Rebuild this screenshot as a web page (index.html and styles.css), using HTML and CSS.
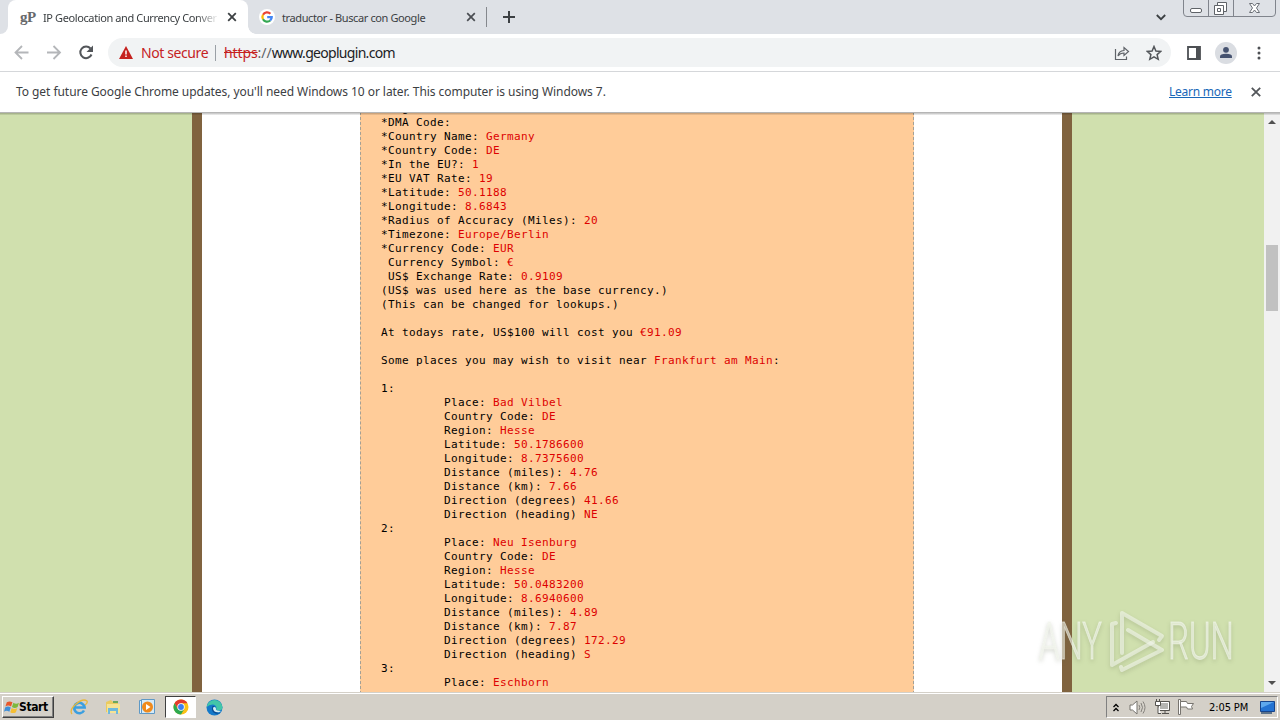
FILE: index.html
```
<!DOCTYPE html>
<html lang="en">
<head>
    <meta charset="utf-8">
    <title>IP Geolocation and Currency Converter</title>
    <link rel="stylesheet" href="styles.css">
</head>
<body>

<div class="tabs">
    <div class="corner"></div>
    <div class="tab active">
        <span class="gp">gP</span>
        <span class="title fade">IP Geolocation and Currency Conver</span>
        <svg class="close" width="10" height="10" viewBox="0 0 10 10"><path d="M1.2 1.2l7.6 7.6M8.8 1.2l-7.6 7.6" stroke="#3c4043" stroke-width="1.8"/></svg>
    </div>
    <div class="tab other">
        <svg class="google" width="16" height="16" viewBox="0 0 16 16">
            <circle cx="8" cy="8" r="8" fill="#fff"/>
            <g fill="none" stroke-width="2.3">
                <path d="M4 5.7A4.7 4.7 0 0 1 11.4 4.7" stroke="#ea4335"/>
                <path d="M4 5.7A4.7 4.7 0 0 0 4 10.3" stroke="#fbbc05"/>
                <path d="M4 10.3A4.7 4.7 0 0 0 11.2 11.5" stroke="#34a853"/>
                <path d="M11.2 11.5A4.7 4.7 0 0 0 12.7 8.2H8.2" stroke="#4285f4"/>
            </g>
        </svg>
        <span class="title">traductor - Buscar con Google</span>
        <svg class="close" width="10" height="10" viewBox="0 0 10 10"><path d="M1.2 1.2l7.6 7.6M8.8 1.2l-7.6 7.6" stroke="#4a4d52" stroke-width="1.7"/></svg>
    </div>
    <div class="tab-line"></div>
    <svg class="plus" width="12" height="12" viewBox="0 0 12 12"><path d="M6 0v12M0 6h12" stroke="#3c4043" stroke-width="2"/></svg>
    <svg class="chevron" width="10" height="7" viewBox="0 0 10 7"><path d="M.8 1L5 5.2 9.2 1" fill="none" stroke="#3c4043" stroke-width="1.8"/></svg>
    <svg class="window-buttons" width="93" height="17" viewBox="0 0 93 17">
        <path d="M.5 0v13q0 3.5 3.5 3.5h85q3.5 0 3.5-3.5V0M25.5 0v16M50.5 0v16" fill="none" stroke="#80848c"/>
        <rect x="7.5" y="8.5" width="11" height="4" rx="1.5" fill="#fff" stroke="#5f6368"/>
        <path d="M34.5 2.5h9v9h-9z" fill="#fff" stroke="#5f6368"/>
        <path d="M31.5 5.5h9v9h-9z" fill="#fff" stroke="#5f6368"/>
        <path d="M34.5 8.5h3v3h-3z" fill="none" stroke="#5f6368"/>
        <path d="M66.5 3.5h3l2 2.5 2-2.5h3l-3 4.5 3 4.5h-3l-2-2.5-2 2.5h-3l3-4.5z" fill="#fff" stroke="#6b6f76"/>
    </svg>
</div>

<div class="toolbar">
    <svg class="nav" width="80" height="18" viewBox="0 0 80 18">
        <g fill="none" stroke-width="1.8">
            <path d="M14.5 8.5H2M8 2L1.5 8.5 8 15" stroke="#b4b6b9"/>
            <path d="M33 8.5h12.5M39.5 2L46 8.5 39.5 15" stroke="#b4b6b9"/>
            <path d="M76.5 4.5A5.8 5.8 0 1 0 77.5 10.5" stroke="#53565a" stroke-width="2"/>
        </g>
        <path d="M79 1.5V8h-6.5z" fill="#53565a"/>
    </svg>
    <div class="address">
        <svg width="14" height="13" viewBox="0 0 14 13"><path d="M7 0l7 13H0z" fill="#c5221f"/><path d="M7 4.5v4M7 9.5v1.6" stroke="#fff" stroke-width="1.5"/></svg>
        <span class="not-secure">Not secure</span>
        <span class="address-line"></span>
        <span class="url"><s>https</s><i>://</i>www.geoplugin.com</span>
        <svg class="share" width="16" height="16" viewBox="0 0 16 16"><path d="M1.5 4v10.5h11V11.5M4 11q.5-5 6-5.5V2.5l4.5 4-4.5 4V8Q6 8 4 11z" fill="none" stroke="#5f6368" stroke-width="1.2"/></svg>
        <svg class="star" width="16" height="16" viewBox="0 0 16 16"><path d="M8 1.5l1.9 4.5 4.9.4-3.7 3.2 1.1 4.7L8 11.8l-4.2 2.5 1.1-4.7L1.2 6.4 6.1 6z" fill="none" stroke="#53565a" stroke-width="1.5"/></svg>
    </div>
    <svg class="panel" width="14" height="14" viewBox="0 0 14 14"><path d="M1 1h12v12H1z" fill="none" stroke="#4d5054" stroke-width="1.8"/><path d="M9 1h4v12H9z" fill="#4d5054"/></svg>
    <svg class="avatar" width="22" height="22" viewBox="0 0 22 22"><circle cx="11" cy="11" r="11" fill="#dadde2"/><circle cx="11" cy="7.8" r="2.9" fill="#465370"/><path d="M5 16v-1.5Q5 11.8 11 11.8t6 2.7V16z" fill="#465370"/></svg>
    <svg class="dots" width="4" height="14" viewBox="0 0 4 14"><g fill="#4d5054"><circle cx="2" cy="2" r="1.5"/><circle cx="2" cy="7" r="1.5"/><circle cx="2" cy="12" r="1.5"/></g></svg>
</div>

<div class="infobar">
    <span class="message">To get future Google Chrome updates, you'll need Windows 10 or later. This computer is using Windows 7.</span>
    <a class="learn">Learn more</a>
    <svg width="10" height="10" viewBox="0 0 10 10"><path d="M.8.8l8.4 8.4M9.2.8L.8 9.2" stroke="#53565a" stroke-width="1.8"/></svg>
</div>

<div class="content">
    <div class="page">
        <div class="column">
<pre class="result">*Region: <b>Hesse</b>
*DMA Code:
*Country Name: <b>Germany</b>
*Country Code: <b>DE</b>
*In the EU?: <b>1</b>
*EU VAT Rate: <b>19</b>
*Latitude: <b>50.1188</b>
*Longitude: <b>8.6843</b>
*Radius of Accuracy (Miles): <b>20</b>
*Timezone: <b>Europe/Berlin</b>
*Currency Code: <b>EUR</b>
 Currency Symbol: <b>€</b>
 US$ Exchange Rate: <b>0.9109</b>
(US$ was used here as the base currency.)
(This can be changed for lookups.)

At todays rate, US$100 will cost you <b>€91.09</b>

Some places you may wish to visit near <b>Frankfurt am Main</b>:

1:
         Place: <b>Bad Vilbel</b>
         Country Code: <b>DE</b>
         Region: <b>Hesse</b>
         Latitude: <b>50.1786600</b>
         Longitude: <b>8.7375600</b>
         Distance (miles): <b>4.76</b>
         Distance (km): <b>7.66</b>
         Direction (degrees) <b>41.66</b>
         Direction (heading) <b>NE</b>
2:
         Place: <b>Neu Isenburg</b>
         Country Code: <b>DE</b>
         Region: <b>Hesse</b>
         Latitude: <b>50.0483200</b>
         Longitude: <b>8.6940600</b>
         Distance (miles): <b>4.89</b>
         Distance (km): <b>7.87</b>
         Direction (degrees) <b>172.29</b>
         Direction (heading) <b>S</b>
3:
         Place: <b>Eschborn</b>
</pre>
        </div>
    </div>
    <div class="scrollbar">
        <svg width="8" height="4" viewBox="0 0 8 4"><path d="M0 4l4-4 4 4z" fill="#505050"/></svg>
        <div class="thumb"></div>
        <svg class="down" width="8" height="4" viewBox="0 0 8 4"><path d="M0 0l4 4 4-4z" fill="#505050"/></svg>
    </div>
    <svg class="watermark" width="220" height="76" viewBox="0 0 220 76">
        <g class="mark-text">
            <text x="7" y="54" textLength="63" lengthAdjust="spacingAndGlyphs">ANY</text>
            <text x="136" y="54" textLength="66" lengthAdjust="spacingAndGlyphs">RUN</text>
        </g>
        <g fill="none" stroke="#f3f6ee" stroke-width="4" stroke-opacity=".6" stroke-linejoin="round" stroke-linecap="round">
            <path d="M90 48V8l40 23-3 4"/>
            <path d="M96 25l34 20L90 65l-1-3"/>
            <path d="M84 18l-4 1v41l41-23"/>
        </g>
    </svg>
</div>

<div class="taskbar">
    <div class="start">
        <svg width="15" height="16" viewBox="0 0 16 16">
            <path d="M3 3q3-2 6 0L7.5 7.5q-3-2-6 0z" fill="#e8572a"/><path d="M10 3.5q3 2 6 0L14.5 8q-3 2-6 0z" fill="#7db83c"/>
            <path d="M1.2 8.5q3-2 6 0L5.7 13q-3-2-5.7 0z" fill="#3f8fd8"/><path d="M8.2 9q3 2 6 0l-1.5 4.5q-3 2-6 0z" fill="#f5be33"/>
        </svg>
        <span>Start</span>
    </div>
    <svg class="ie" width="18" height="18" viewBox="0 0 18 18"><path d="M14 12.5a5.2 5.2 0 1 1 .6-3H4.5" fill="none" stroke="#3b9fe0" stroke-width="2.6"/><path d="M2 16Q-1 12 6 6t11-3q1 2-2 4" fill="none" stroke="#e8b83c" stroke-width="1.3"/></svg>
    <svg class="folder" width="18" height="18" viewBox="0 0 18 18"><path d="M2 4l5-2 2 2h5v10H2z" fill="#eacb60"/><path d="M3 6h13v9H3z" fill="#f6e394"/><path d="M4 16V10h10v6h-2v-3H6v3z" fill="#6fb9dc"/><path d="M9 3h5v2H9z" fill="#6ba85e"/></svg>
    <svg class="player" width="16" height="16" viewBox="0 0 16 16"><path d="M.5 1.5h11v13H.5z" fill="#e3f0fa" stroke="#5e99c6"/><path d="M2.5.5h13v14h-13z" fill="#d5eaf8" stroke="#5e99c6"/><circle cx="8.5" cy="8" r="5.5" fill="#f08a1c"/><path d="M7 5l4.5 3L7 11z" fill="#fff"/></svg>
    <div class="chrome">
        <svg width="16" height="16" viewBox="0 0 16 16"><circle cx="8" cy="8" r="7.5" fill="#fbc116"/><path d="M1.5 4.25A7.5 7.5 0 0 1 14.5 4.25H8L4.8 10z" fill="#e33b2e"/><path d="M1.5 4.25A7.5 7.5 0 0 0 8 15.5L11.3 10 4.8 10z" fill="#2da94f"/><circle cx="8" cy="8" r="3.7" fill="#fff"/><circle cx="8" cy="8" r="2.9" fill="#3c7ff0"/></svg>
    </div>
    <svg class="edge" width="17" height="17" viewBox="0 0 17 17"><circle cx="8.5" cy="8.5" r="8" fill="#1479c9"/><path d="M.6 8A8 8 0 0 1 16.5 8q0 3.5-4 3.5-3 0-2-2.5Q10 5.5 6.5 5.5T.6 8z" fill="#43c6a8"/><path d="M6.5 7q-2 6 3 7.5 3 1 5-1-4 1-6-1.5T8.5 7z" fill="#0c4d94"/><path d="M7 9q1-2 3 0-1 2.5 3 2.7l2 .2-2 1.3Q7 13.5 7 9z" fill="#d7eef3"/></svg>
    <div class="tray">
        <svg class="up" width="6" height="9" viewBox="0 0 6 9"><path d="M.5 4L3 1.5 5.5 4M.5 8L3 5.5 5.5 8" fill="none" stroke="#000" stroke-width="1.3"/></svg>
        <svg class="sound" width="17" height="15" viewBox="0 0 17 15"><path d="M1 5h2.5L8 1v13l-4.5-4H1z" fill="#fff" stroke="#77746f"/><path d="M10 5q1.5 2.5 0 5M12 3q3 4.5 0 9M14 1.5q4 6 0 12" fill="none" stroke="#85827d"/></svg>
        <svg class="network" width="17" height="16" viewBox="0 0 17 16"><path d="M4.5 2.5h11v9h-11z" fill="#b5b5b2" stroke="#55534f"/><path d="M5.5 3.5h9v7h-9z" fill="none" stroke="#fff"/><path d="M1.500 2.500h5v4h-5zM2.500 0v2M5.500 0v2M4 6.500v8h3" fill="#fff" stroke="#55534f"/><path d="M8 14.500h7M11 12v2" stroke="#55534f"/></svg>
        <svg class="flag" width="16" height="16" viewBox="0 0 16 16"><path d="M.5.5h2v15h-2z" fill="#fff" stroke="#77746f"/><path d="M2.5 2.5h6l1 2h6l-2 3 1 2.5h-5l-1-2h-6z" fill="#fff" stroke="#77746f"/></svg>
        <span class="clock">2:05 PM</span>
        <svg class="desktop" width="16" height="14" viewBox="0 0 16 14"><path d="M.5 1.5h14v10H.5z" fill="#2473d2" stroke="#17448b"/><path d="M1 2h13L1 8z" fill="#5ea8ed"/><path d="M1 13h11" stroke="#345375" stroke-width="1.5"/></svg>
    </div>
</div>

</body>
</html>
```
FILE: styles.css
```
* {
  box-sizing: border-box;
}
body {
  margin: 0;
  width: 1280px;
  height: 720px;
  overflow: hidden;
  display: flex;
  flex-direction: column;
  font-family: "Noto Sans", "Open Sans", sans-serif;
  font-size: 13px;
  color: #3c4043;
}
svg {
  display: block;
  flex: none;
}
span, a {
  white-space: nowrap;
}

/* tab strip */
.tabs {
  flex: none;
  height: 34px;
  display: flex;
  align-items: center;
  background: #dee1e6;
}
.corner {
  width: 8px;
  height: 34px;
  background: white;
}
.corner::after {
  content: "";
  display: block;
  height: 34px;
  background: #dee1e6;
  border-bottom-right-radius: 8px;
}
.tab {
  height: 34px;
  display: flex;
  align-items: center;
  font-size: 11px;
}
.active {
  width: 240px;
  padding-left: 12px;
  background: white;
  border-radius: 8px 8px 0 0;
}
.gp {
  width: 23px;
  font-family: "Liberation Serif", serif;
  font-size: 15px;
  font-weight: bold;
  letter-spacing: -0.5px;
  color: #66686b;
}
.title {
  width: 178px;
  letter-spacing: -0.39px;
}
.fade {
  -webkit-mask-image: linear-gradient(to right, black 153px, transparent 176px);
  mask-image: linear-gradient(to right, black 153px, transparent 176px);
}
.close {
  margin-left: 6px;
}
.other {
  width: 238px;
  padding-left: 11px;
  position: relative;
}
.other::before {
  content: "";
  position: absolute;
  left: 0;
  bottom: 0;
  width: 8px;
  height: 8px;
  background: radial-gradient(circle at 8px 0, transparent 7.5px, white 8px);
}
.other .title {
  width: 184px;
  margin-left: 7px;
}
.other .close {
  margin-left: 0;
}
.tab-line {
  width: 1px;
  height: 20px;
  background: #85888d;
}
.plus {
  margin-left: 16px;
}
.chevron {
  margin-left: 641px;
}
.window-buttons {
  margin-left: 17px;
  align-self: flex-start;
}

/* toolbar */
.toolbar {
  flex: none;
  height: 38px;
  display: flex;
  align-items: center;
  background: white;
  border-bottom: 1px solid #d5d7da;
}
.nav {
  margin-left: 14px;
}
.address {
  width: 1063px;
  height: 29px;
  margin-left: 14px;
  padding-left: 11px;
  display: flex;
  align-items: center;
  background: #f1f3f4;
  border-radius: 15px;
  font-size: 14px;
}
.not-secure {
  width: 67px;
  margin-left: 8px;
  letter-spacing: -0.4px;
  color: #c5221f;
}
.address-line {
  width: 1px;
  height: 16px;
  margin-left: 7px;
  background: #9aa0a6;
}
.url {
  width: 180px;
  margin-left: 8px;
  letter-spacing: -0.7px;
  color: #202124;
}
.url s {
  letter-spacing: -0.1px;
  color: #c5221f;
}
.url i {
  font-style: normal;
  letter-spacing: 0;
  color: #5f6368;
}
.share {
  margin-left: 710px;
}
.star {
  margin-left: 16px;
}
.panel {
  margin-left: 16px;
}
.avatar {
  margin-left: 14px;
}
.dots {
  margin-left: 20px;
}

/* update message */
.infobar {
  flex: none;
  height: 41px;
  padding-left: 16px;
  display: flex;
  align-items: center;
  background: white;
  border-bottom: 1px solid #b5b5b5;
  font-size: 12px;
}
.message {
  width: 1153px;
  padding-bottom: 1px;
  letter-spacing: -0.055px;
}
.learn {
  width: 63px;
  padding-bottom: 1px;
  margin-right: 19px;
  letter-spacing: -0.25px;
  color: #1967b8;
  text-decoration: underline;
}

/* web page */
.content {
  flex: 1;
  min-height: 0;
  position: relative;
  display: flex;
  overflow: hidden;
  border-bottom: 1px solid #d4d0c8;
}
.content::before {
  content: "";
  position: absolute;
  top: 0;
  width: 1280px;
  height: 2px;
  background: linear-gradient(rgba(0, 0, 0, .25), rgba(0, 0, 0, .05));
}
.page {
  width: 1264px;
  background: #d0e0ae;
}
.column {
  width: 880px;
  height: 100%;
  margin: 0 auto;
  border: solid #80633f;
  border-width: 0 10px;
  background: white;
  display: flex;
  align-items: flex-start;
}
.result {
  width: 554px;
  margin: -11px 0 0 158px;
  padding: 0 0 14px 20px;
  border: dashed #a3a096;
  border-width: 0 1px;
  background: #ffcc99;
  color: black;
  font: 11px/14px "DejaVu Sans Mono", monospace;
  letter-spacing: 0.378px;
}
.result b {
  font-weight: normal;
  color: #dd0000;
}
.scrollbar {
  width: 16px;
  padding: 7px 0;
  display: flex;
  flex-direction: column;
  align-items: center;
  background: #f1f1f1;
}
.thumb {
  width: 12px;
  height: 66px;
  margin-top: 121px;
  background: #c1c1c1;
}
.down {
  margin-top: auto;
}
.watermark {
  position: absolute;
  left: 1032px;
  top: 492px;
  filter: drop-shadow(0 2px 2px rgba(90, 100, 70, .35));
}
.mark-text {
  font-family: Roboto, sans-serif;
  font-size: 51px;
  font-weight: 300;
  fill: #f3f6ee;
  fill-opacity: .6;
  stroke: #f3f6ee;
  stroke-opacity: .6;
}

/* taskbar */
.taskbar {
  flex: none;
  height: 27px;
  display: flex;
  align-items: center;
  background: #d4d0c8;
  border-top: 1px solid white;
}
.start {
  width: 52px;
  height: 22px;
  margin-left: 2px;
  padding-left: 1px;
  display: flex;
  align-items: center;
  border: 1px solid;
  border-color: white #404040 #404040 white;
  box-shadow: inset -1px -1px #808080;
  font: bold 12px "DejaVu Sans Condensed", sans-serif;
  letter-spacing: -0.4px;
  color: black;
}
.ie {
  margin-left: 16px;
}
.folder {
  margin-left: 16px;
}
.player {
  margin-left: 17px;
}
.chrome {
  width: 31px;
  height: 22px;
  margin-left: 10px;
  display: flex;
  align-items: center;
  justify-content: center;
  background: white;
  border: 1px solid;
  border-color: #404040 white white #404040;
}
.edge {
  margin-left: 10px;
}
.tray {
  width: 172px;
  height: 22px;
  margin-left: auto;
  margin-right: 2px;
  display: flex;
  align-items: center;
  border: 1px solid;
  border-color: #808080 white white #808080;
}
.up {
  margin-left: 6px;
}
.sound {
  margin-left: 10px;
}
.network {
  margin-left: 8px;
}
.flag {
  margin-left: 7px;
}
.clock {
  width: 40px;
  margin-left: 15px;
  font: 11px "DejaVu Sans Condensed", sans-serif;
  letter-spacing: -0.1px;
  color: black;
}
.desktop {
  margin-left: 11px;
}
```
